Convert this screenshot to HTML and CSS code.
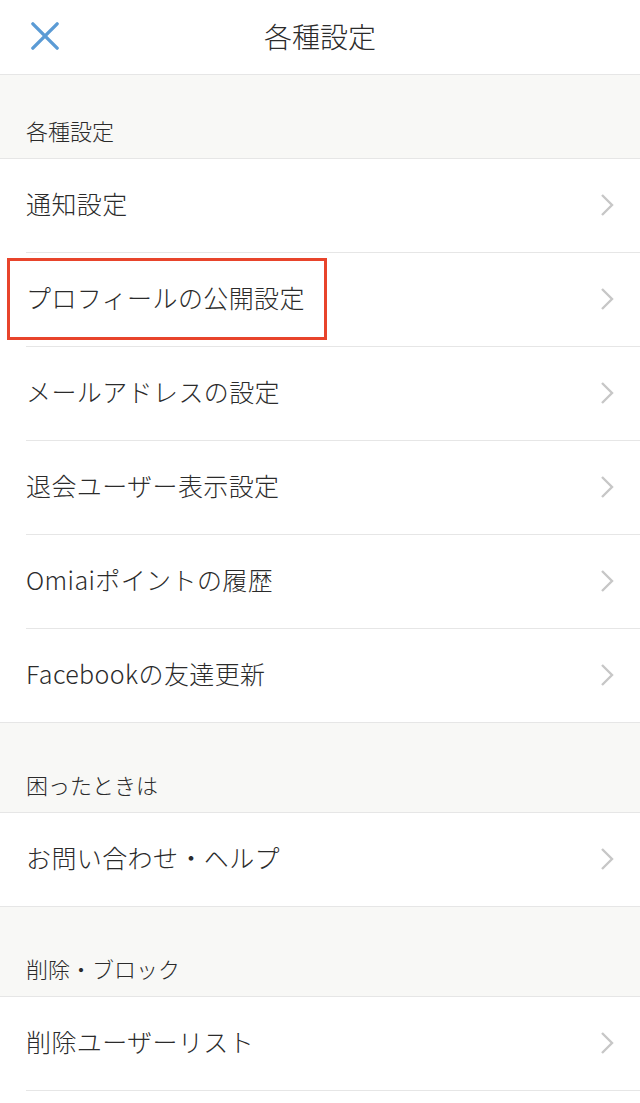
FILE: index.html
```html
<!DOCTYPE html>
<html lang="ja">
<head>
    <meta charset="UTF-8">
    <meta name="viewport" content="width=device-width, initial-scale=1.0">
    <title>各種設定</title>
    <link rel="stylesheet" href="styles.css">
</head>
<body>
    <header class="topbar">
        <svg class="close" viewBox="0 0 30 30">
            <path d="M2 2 L28 28 M28 2 L2 28" />
        </svg>
        <h1>各種設定</h1>
    </header>

    <div class="section first">各種設定</div>
    <div class="row">通知設定<svg class="chev" viewBox="0 0 14 24"><path d="M2 2 L12 12 L2 22" /></svg></div>
    <div class="row">プロフィールの公開設定<svg class="chev" viewBox="0 0 14 24"><path d="M2 2 L12 12 L2 22" /></svg><div class="mark"></div></div>
    <div class="row">メールアドレスの設定<svg class="chev" viewBox="0 0 14 24"><path d="M2 2 L12 12 L2 22" /></svg></div>
    <div class="row">退会ユーザー表示設定<svg class="chev" viewBox="0 0 14 24"><path d="M2 2 L12 12 L2 22" /></svg></div>
    <div class="row">Omiaiポイントの履歴<svg class="chev" viewBox="0 0 14 24"><path d="M2 2 L12 12 L2 22" /></svg></div>
    <div class="row last">Facebookの友達更新<svg class="chev" viewBox="0 0 14 24"><path d="M2 2 L12 12 L2 22" /></svg></div>

    <div class="section">困ったときは</div>
    <div class="row last">お問い合わせ・ヘルプ<svg class="chev" viewBox="0 0 14 24"><path d="M2 2 L12 12 L2 22" /></svg></div>

    <div class="section">削除・ブロック</div>
    <div class="row">削除ユーザーリスト<svg class="chev" viewBox="0 0 14 24"><path d="M2 2 L12 12 L2 22" /></svg></div>
</body>
</html>
```

FILE: styles.css
```css
body {
    margin: 0;
    font-family: "Noto Sans CJK JP", "Noto Sans", sans-serif;
    font-weight: 300;
    color: #2b2b2b;
    background: #fff;
}
.topbar {
    height: 74px;
    border-bottom: 1px solid #e6e6e6;
    display: flex;
    align-items: center;
    justify-content: center;
    position: relative;
}
.topbar h1 {
    margin: 0;
    font-size: 28px;
    font-weight: 300;
    padding-bottom: 2px;
}
.close {
    position: absolute;
    left: 30px;
    top: 22px;
    width: 30px;
    height: 28px;
}
.close path {
    stroke: #5b9bd5;
    stroke-width: 3.6;
    stroke-linecap: round;
    fill: none;
}
.section {
    height: 90px;
    box-sizing: border-box;
    padding: 0 26px 12px;
    background: #f8f8f6;
    border-bottom: 1px solid #e6e6e6;
    display: flex;
    align-items: flex-end;
    font-size: 22px;
    line-height: 32px;
}
.section.first {
    height: 84px;
}
.row {
    position: relative;
    height: 94px;
    box-sizing: border-box;
    margin-left: 26px;
    padding: 0 26px 5px 0;
    border-bottom: 1px solid #e6e6e6;
    display: flex;
    align-items: center;
    justify-content: space-between;
    font-size: 25px;
    letter-spacing: 0.4px;
}
.row.last {
    margin-left: 0;
    padding-left: 26px;
}
.chev {
    width: 14px;
    height: 24px;
    margin-top: 4px;
}
.chev path {
    stroke: #c7c7c7;
    stroke-width: 2.4;
    fill: none;
}
.mark {
    position: absolute;
    left: -19px;
    top: 5px;
    width: 314px;
    height: 76px;
    border: 3px solid #e8442b;
}
```
